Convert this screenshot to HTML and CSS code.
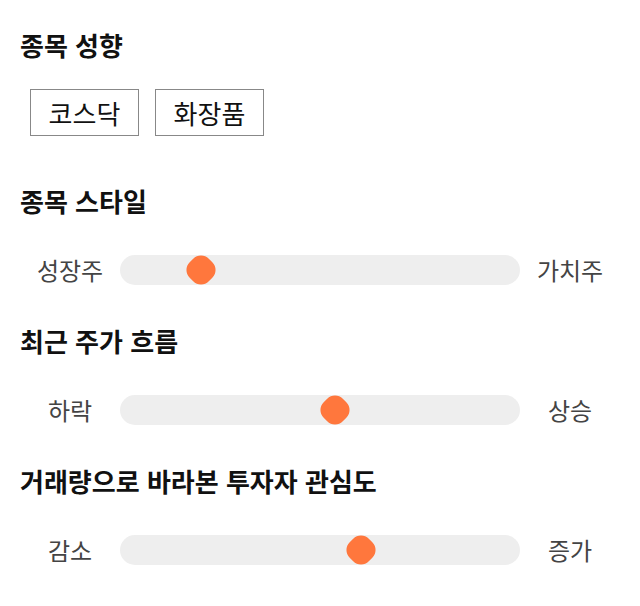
FILE: index.html
```html
<!DOCTYPE html>
<html lang="ko">

<head>
    <meta charset="UTF-8">
    <meta name="viewport" content="width=device-width, initial-scale=1.0">
    <title>종목 설정</title>
    <link rel="stylesheet" href="styles.css">
</head>

<body>

    <div class="panel">
        <!-- 종목 성향 -->
        <section class="section section-chips">
            <h2 class="section-title">종목 성향</h2>
            <div class="chip-list">
                <button class="chip">코스닥</button>
                <button class="chip">화장품</button>
            </div>
        </section>

        <!-- 종목 스타일 -->
        <section class="section">
            <h2 class="section-title">종목 스타일</h2>
            <div class="range-row">
                <span class="range-label">성장주</span>
                <div class="range-track">
                    <span class="range-thumb" style="left: 20.3%"></span>
                </div>
                <span class="range-label">가치주</span>
            </div>
        </section>

        <!-- 최근 주가 흐름 -->
        <section class="section">
            <h2 class="section-title">최근 주가 흐름</h2>
            <div class="range-row">
                <span class="range-label">하락</span>
                <div class="range-track">
                    <span class="range-thumb" style="left: 53.8%"></span>
                </div>
                <span class="range-label">상승</span>
            </div>
        </section>

        <!-- 거래량 -->
        <section class="section">
            <h2 class="section-title">거래량으로 바라본 투자자 관심도</h2>
            <div class="range-row">
                <span class="range-label">감소</span>
                <div class="range-track">
                    <span class="range-thumb" style="left: 60.2%"></span>
                </div>
                <span class="range-label">증가</span>
            </div>
        </section>
    </div>

</body>

</html>
```

FILE: styles.css
```css
/* Theme */
:root {
    --text-color: #111111;
    --label-color: #444444;
    --track-bg: #eeeeee;
    --thumb-color: #ff773d;
    --chip-border: #888888;
}

body {
    font-family: "Noto Sans CJK KR", "Noto Sans", sans-serif;
    background: #ffffff;
    color: var(--text-color);
    margin: 0;
}

.panel {
    padding: 30px 20px 20px;
}

.section {
    margin-bottom: 41px;
}

.section-chips {
    margin-bottom: 50px;
}

.section-title {
    margin: 0;
    font-size: 26px;
    font-weight: bold;
    line-height: 30px;
}

.chip-list {
    display: flex;
    gap: 16px;
    padding-left: 10px;
    margin-top: 29px;
}

.chip {
    width: 109px;
    height: 47px;
    padding: 0;
    background: #ffffff;
    border: 1px solid var(--chip-border);
    font-family: inherit;
    font-size: 26px;
    line-height: 45px;
    color: var(--text-color);
}

.range-row {
    display: flex;
    align-items: center;
    margin-top: 39px;
}

.range-label {
    width: 100px;
    text-align: center;
    font-size: 24px;
    line-height: 30px;
    color: var(--label-color);
}

.range-track {
    flex: 1;
    height: 30px;
    background: var(--track-bg);
    border-radius: 15px;
    position: relative;
}

.range-thumb {
    position: absolute;
    top: 50%;
    width: 27px;
    height: 27px;
    background: var(--thumb-color);
    border-radius: 11px;
    transform: translate(-50%, -50%) rotate(45deg);
}
```
